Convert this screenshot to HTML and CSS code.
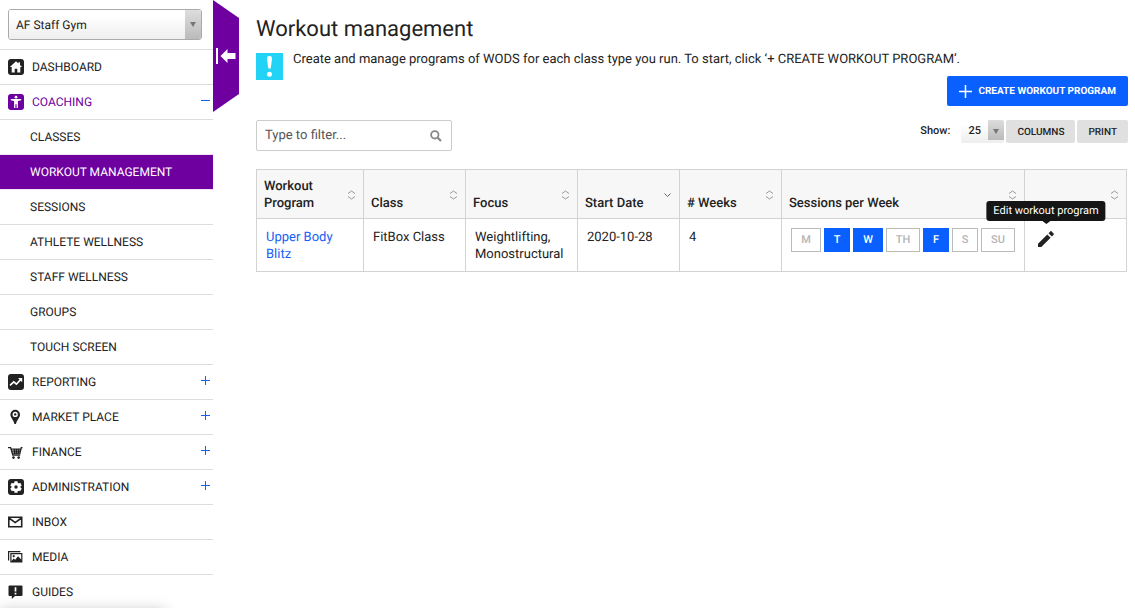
FILE: index.html
```html
<!DOCTYPE html>
<html lang="en">
<head>
    <meta charset="UTF-8">
    <meta name="viewport" content="width=device-width, initial-scale=1">
    <title>Workout management</title>
    <link rel="stylesheet" href="styles.css">
</head>
<body>
<div class="layout">
    <nav class="sidebar">
        <div class="gym-select select-wrap">
            <select aria-label="Gym">
                <option selected>AF Staff Gym</option>
            </select>
        </div>
        <ul class="menu">
            <li><a href="#">
                <svg class="icon" viewBox="0 0 16 16"><rect width="16" height="16" rx="3" fill="currentColor"/><path d="M8 2.2 1.9 8h1.8v5.4h3V9.8h2.6v3.6h3V8h1.8L12 5.9V3.2h-1.6v1.2z" fill="#fff"/></svg>
                <span>DASHBOARD</span></a></li>
            <li><a href="#" class="open">
                <svg class="icon" viewBox="0 0 16 16"><rect width="16" height="16" rx="3" fill="currentColor"/><circle cx="8" cy="3.2" r="1.4" fill="#fff"/><path d="M2.8 5h10.4v1.3l-3.3.6v7H8.6v-3.7H7.4v3.7H6.1v-7l-3.3-.6z" fill="#fff"/></svg>
                <span>COACHING</span><i class="toggle minus"></i></a></li>
            <li class="sub"><a href="#">CLASSES</a></li>
            <li class="sub active"><a href="#">WORKOUT MANAGEMENT</a></li>
            <li class="sub"><a href="#">SESSIONS</a></li>
            <li class="sub"><a href="#">ATHLETE WELLNESS</a></li>
            <li class="sub"><a href="#">STAFF WELLNESS</a></li>
            <li class="sub"><a href="#">GROUPS</a></li>
            <li class="sub"><a href="#">TOUCH SCREEN</a></li>
            <li><a href="#">
                <svg class="icon" viewBox="0 0 16 16"><rect width="16" height="16" rx="3" fill="currentColor"/><path d="m2 11.4 3.8-3.6 2.6 2.4 4.2-4.6" fill="none" stroke="#fff" stroke-width="1.6"/><path d="M10 4h4.2v4.2z" fill="#fff"/></svg>
                <span>REPORTING</span><i class="toggle"></i></a></li>
            <li><a href="#">
                <svg class="icon" viewBox="0 0 16 16"><path fill-rule="evenodd" d="M7.2.8a4.8 4.8 0 0 0-4.8 4.8c0 3.4 3 5 4 9.4h1.6c1-4.4 4-6 4-9.4A4.8 4.8 0 0 0 7.2.8zm0 2a2.6 2.6 0 1 1 0 5.2 2.6 2.6 0 0 1 0-5.2z" fill="currentColor"/><circle cx="7.2" cy="5.4" r="1.2" fill="currentColor"/></svg>
                <span>MARKET PLACE</span><i class="toggle"></i></a></li>
            <li><a href="#">
                <svg class="icon" viewBox="0 0 16 16"><path d="M0 3.6h2.6L4.8 11h7.4M3 5.2h10.200M4 7.200h8.800M4.500 9.200h7.700M14.500 3.600h-1.200L11.700 10M6.300 5l.5 5M8.500 5v5M10.700 5l-.4 5" fill="none" stroke="currentColor" stroke-width="1.300"/><circle cx="5.500" cy="13.600" r="1.300" fill="currentColor"/><circle cx="10.700" cy="13.600" r="1.300" fill="currentColor"/></svg>
                <span>FINANCE</span><i class="toggle"></i></a></li>
            <li><a href="#">
                <svg class="icon" viewBox="0 0 16 16"><rect width="16" height="16" rx="3" fill="currentColor"/><circle cx="8" cy="8" r="4.600" fill="#fff"/><path d="M8 2.200v11.600M3 5.100l10 5.800M13 5.100l-10 5.800" stroke="#fff" stroke-width="3.200"/><circle cx="8" cy="8" r="1.700" fill="currentColor"/></svg>
                <span>ADMINISTRATION</span><i class="toggle"></i></a></li>
            <li><a href="#">
                <svg class="icon" viewBox="0 0 16 16"><path d="M.8 3.300h12.900v9.400H.8zM1 4l6.200 4.600L13.500 4" fill="none" stroke="currentColor" stroke-width="1.600"/></svg>
                <span>INBOX</span></a></li>
            <li><a href="#">
                <svg class="icon" viewBox="0 0 16 16"><path d="M.6 11.500V2.600h11.800M2.900 4.700h10.900v8.200H2.900z" fill="none" stroke="currentColor" stroke-width="1.200"/><path d="m3 12.500 2.600-3 1.600 1.200 2.800-3.500 3.700 3.800v2H3z" fill="currentColor"/><circle cx="5.700" cy="7.200" r="1.100" fill="currentColor"/></svg>
                <span>MEDIA</span></a></li>
            <li><a href="#">
                <svg class="icon" viewBox="0 0 16 16"><path d="M1.500 1.500h12q1 0 1 1v8.500q0 1-1 1H7L3.800 15v-3H1.500q-1 0-1-1V2.500q0-1 1-1z" fill="currentColor"/><path d="M7.500 3.200v4.200M7.500 8.700v1.700" stroke="#fff" stroke-width="1.700"/></svg>
                <span>GUIDES</span></a></li>
        </ul>
    </nav>

    <button class="collapse" aria-label="Collapse menu">
        <svg width="20" height="16" viewBox="0 0 20 16"><path d="M0 0h2v16H0zM4.500 8l7-7v4H19.500v6h-8v4z" fill="#fff"/></svg>
    </button>

    <main class="content">
        <h1>Workout management</h1>
        <div class="info">
            <svg class="info-icon" viewBox="0 0 27 27"><path d="M13.500 3c-2 0-2.600 1.200-2.500 3l1.300 9.600h2.400L16 6c.1-1.800-.5-3-2.500-3z" fill="#fff"/><circle cx="13.500" cy="21.300" r="2.500" fill="#fff"/></svg>
            <p>Create and manage programs of WODS for each class type you run. To start, click ‘+ CREATE WORKOUT PROGRAM’.</p>
        </div>
        <div class="actions">
            <button class="create">
                <svg width="13" height="13" viewBox="0 0 13 13"><path d="M6.500 0v13M0 6.500h13" stroke="#fff" stroke-width="1.500"/></svg>
                CREATE WORKOUT PROGRAM
            </button>
        </div>
        <div class="toolbar">
            <div class="filter">
                <input type="text" placeholder="Type to filter..." aria-label="Filter">
                <svg width="12" height="12" viewBox="0 0 12 12"><circle cx="4.800" cy="4.800" r="3.700" fill="none" stroke="#888" stroke-width="1.800"/><path d="m7.500 7.500 3.500 3.500" stroke="#888" stroke-width="2.200"/></svg>
            </div>
            <div class="tools">
                <label for="pageSize">Show:</label>
                <div class="page-size select-wrap">
                    <select id="pageSize">
                        <option selected>25</option>
                    </select>
                </div>
                <button>COLUMNS</button>
                <button>PRINT</button>
            </div>
        </div>

        <table class="programs">
            <colgroup>
                <col class="col-program"><col class="col-mid"><col class="col-focus"><col class="col-mid"><col class="col-mid"><col><col class="col-mid">
            </colgroup>
            <thead>
            <tr>
                <th><div class="head"><span>Workout Program</span><svg class="sort" viewBox="0 0 9 10"><path d="M1 3.500 4.500 1 8 3.500M1 6.500 4.500 9 8 6.500"/></svg></div></th>
                <th><div class="head"><span>Class</span><svg class="sort" viewBox="0 0 9 10"><path d="M1 3.500 4.500 1 8 3.500M1 6.500 4.500 9 8 6.500"/></svg></div></th>
                <th><div class="head"><span>Focus</span><svg class="sort" viewBox="0 0 9 10"><path d="M1 3.500 4.500 1 8 3.500M1 6.500 4.500 9 8 6.500"/></svg></div></th>
                <th><div class="head"><span>Start Date</span><svg class="sort sorted" viewBox="0 0 9 10"><path d="M1.500 3.500l3 3 3-3"/></svg></div></th>
                <th><div class="head"><span># Weeks</span><svg class="sort" viewBox="0 0 9 10"><path d="M1 3.500 4.500 1 8 3.500M1 6.500 4.500 9 8 6.500"/></svg></div></th>
                <th><div class="head"><span>Sessions per Week</span><svg class="sort" viewBox="0 0 9 10"><path d="M1 3.500 4.500 1 8 3.500M1 6.500 4.500 9 8 6.500"/></svg></div></th>
                <th><div class="head"><span></span><svg class="sort" viewBox="0 0 9 10"><path d="M1 3.500 4.500 1 8 3.500M1 6.500 4.500 9 8 6.500"/></svg></div></th>
            </tr>
            </thead>
            <tbody>
            <tr>
                <td><a href="#">Upper Body Blitz</a></td>
                <td>FitBox Class</td>
                <td>Weightlifting, Monostructural</td>
                <td>2020-10-28</td>
                <td>4</td>
                <td class="tight">
                    <div class="days">
                        <span class="day wide">M</span>
                        <span class="day on">T</span>
                        <span class="day wide on">W</span>
                        <span class="day wider">TH</span>
                        <span class="day on">F</span>
                        <span class="day">S</span>
                        <span class="day wider">SU</span>
                    </div>
                </td>
                <td class="tight">
                    <button class="edit" aria-label="Edit workout program">
                        <svg width="18" height="18" viewBox="0 0 18 18"><path d="M1 13.700V17h3.300L13.600 7.700l-3.300-3.300zM16.600 4.700c.4-.4.4-.9 0-1.300l-2-2c-.4-.4-.9-.4-1.300 0l-1.800 1.800 3.300 3.300z" fill="#222"/></svg>
                        <span class="tooltip" role="tooltip">Edit workout program</span>
                    </button>
                </td>
            </tr>
            </tbody>
        </table>
    </main>
</div>
<div class="bottom-shadow"></div>
</body>
</html>
```

FILE: styles.css
```css
* {
    box-sizing: border-box;
}

body {
    margin: 0;
    background: #fff;
    color: #222;
    font-family: Roboto, "Liberation Sans", sans-serif;
    font-size: 12px;
    text-rendering: geometricPrecision;
}

button, input, select {
    font-family: inherit;
    color: inherit;
    text-rendering: inherit;
}

button {
    border: 0;
    padding: 0;
    cursor: pointer;
}

a {
    color: #1560f5;
    text-decoration: none;
}

.layout {
    display: flex;
    align-items: flex-start;
}

/* sidebar */
.sidebar {
    flex: none;
    width: 213px;
    height: 100vh;
    overflow: hidden;
}

.select-wrap {
    position: relative;
    overflow: hidden;
}

.select-wrap select {
    appearance: none;
    width: 100%;
    height: 100%;
    border: 0;
    margin: 0;
    background: linear-gradient(#fff 20%, #eee);
}

.select-wrap:before {
    content: "";
    position: absolute;
    top: 0;
    right: 0;
    width: 16px;
    height: 100%;
    background: linear-gradient(#ddd, #bbb);
    pointer-events: none;
}

.select-wrap:after {
    content: "";
    position: absolute;
    top: calc(50% - 3px);
    right: 5px;
    border: 3px solid transparent;
    border-top: 5px solid #777;
    border-bottom: 0;
    pointer-events: none;
}

.gym-select {
    height: 31px;
    margin: 9px 11px 9px 8px;
    border: 1px solid #aaa;
    border-radius: 3px;
}

.gym-select select {
    padding: 0 24px 0 7px;
    font-size: 12px;
}

.menu {
    list-style: none;
    margin: 0;
    padding: 0;
}

.menu li {
    border-top: 1px solid #ddd;
}

.menu a {
    display: flex;
    align-items: center;
    height: 34px;
    padding: 0 3px 0 8px;
    color: #222;
}

.menu .icon {
    width: 16px;
    height: 16px;
    margin-right: 8px;
}

.menu .open {
    color: #6e00a0;
}

.menu .sub a {
    padding-left: 30px;
}

.menu .active,
.menu .active + li {
    border-color: #f0e4f5;
}

.menu .active a {
    background: #6e00a0;
    color: #fff;
}

.toggle {
    width: 9px;
    height: 9px;
    margin: 0 0 3px auto;
    background: linear-gradient(#1560f5, #1560f5) center / 9px 1px no-repeat,
        linear-gradient(#1560f5, #1560f5) center / 1px 9px no-repeat;
}

.toggle.minus {
    background: linear-gradient(#1560f5, #1560f5) center / 9px 1px no-repeat;
}

.collapse {
    flex: none;
    width: 26px;
    height: 112px;
    padding-left: 3px;
    background: #6e00a0;
    clip-path: polygon(0 0, 100% 18px, 100% 94px, 0 100%);
}

.collapse svg {
    display: block;
}

/* content */
.content {
    flex: 1;
    min-width: 0;
    padding: 15px 7px 0 17px;
}

h1 {
    margin: 0;
    font-size: 22px;
    font-weight: 400;
    line-height: 30px;
}

.info {
    display: flex;
    gap: 10px;
    margin-top: 8px;
}

.info-icon {
    flex: none;
    width: 27px;
    height: 27px;
    background: #23d3f5;
}

.info p {
    margin: -2px 0 0;
    font-size: 13px;
    line-height: 18px;
}

.actions {
    display: flex;
    justify-content: flex-end;
    margin-top: -4px;
}

.create {
    display: flex;
    align-items: center;
    gap: 6px;
    height: 30px;
    padding: 1px 12px 0;
    border-radius: 2px;
    background: #0a5fff;
    color: #fff;
    font-size: 10px;
    font-weight: 700;
}

.toolbar {
    display: flex;
    justify-content: space-between;
    align-items: flex-start;
    margin-top: 14px;
}

.filter {
    display: flex;
    align-items: center;
    width: 196px;
    height: 31px;
    padding-right: 9px;
    border: 1px solid #ccc;
    border-radius: 2px;
}

.filter input {
    flex: 1;
    min-width: 0;
    border: 0;
    outline: 0;
    padding: 0 8px;
    font-size: 13px;
}

.filter input::placeholder {
    color: #555;
}

.tools {
    display: flex;
    gap: 2px;
    height: 23px;
}

.tools label {
    margin-right: 9px;
    font-size: 11px;
    font-weight: 500;
    line-height: 21px;
}

.page-size {
    width: 43px;
    border-radius: 2px;
}

.page-size select {
    padding: 0 18px 2px 7px;
    font-size: 11px;
    font-weight: 500;
}

.page-size:before {
    height: 20px;
}

.tools button {
    padding: 1px 11px 0;
    border-radius: 2px;
    background: #e0e0e0;
    font-size: 10px;
    font-weight: 500;
}

/* table */
.programs {
    width: calc(100% - 1px);
    margin-top: 18px;
    border-collapse: collapse;
    table-layout: fixed;
    font-size: 13px;
    line-height: 17px;
}

.col-program {
    width: 107px;
}

.col-mid {
    width: 102px;
}

.col-focus {
    width: 112px;
}

.programs th,
.programs td {
    border: 1px solid #d3d3d3;
    text-align: left;
    vertical-align: top;
}

.programs th {
    padding: 8px 7px 6px;
    background: #f7f7f7;
    font-weight: 500;
}

.programs td {
    padding: 10px 6px 8px 9px;
}

.programs .tight {
    padding-top: 9px;
}

.head {
    display: flex;
    justify-content: space-between;
    align-items: flex-end;
    min-height: 34px;
}

.sort {
    flex: none;
    align-self: center;
    width: 9px;
    height: 10px;
    fill: none;
    stroke: #999;
}

.sort.sorted {
    stroke: #666;
}

.days {
    display: flex;
    gap: 3px;
}

.day {
    width: 26px;
    height: 24px;
    border: 1px solid #bbb;
    color: #b5b5b5;
    font-size: 11px;
    font-weight: 500;
    line-height: 22px;
    text-align: center;
}

.day.wide {
    width: 30px;
}

.day.wider {
    width: 34px;
}

.day.on {
    border-color: #0a5fff;
    background: #0a5fff;
    color: #fff;
}

.edit {
    position: relative;
    display: block;
    margin: 2px 0 0 3px;
    background: none;
}

.edit svg {
    display: block;
}

.tooltip {
    position: absolute;
    bottom: 27px;
    left: 50%;
    transform: translateX(-50%);
    padding: 0 7px;
    border-radius: 3px;
    background: #151515;
    color: #fff;
    font-size: 11px;
    line-height: 20px;
    white-space: nowrap;
}

.tooltip:after {
    content: "";
    position: absolute;
    top: 100%;
    left: 50%;
    margin-left: -4px;
    border: 4px solid transparent;
    border-top: 3px solid #151515;
    border-bottom: 0;
}

.bottom-shadow {
    position: fixed;
    left: 0;
    bottom: -22px;
    width: 165px;
    height: 18px;
    box-shadow: 0 0 16px rgba(0, 0, 0, 0.3);
}
```
